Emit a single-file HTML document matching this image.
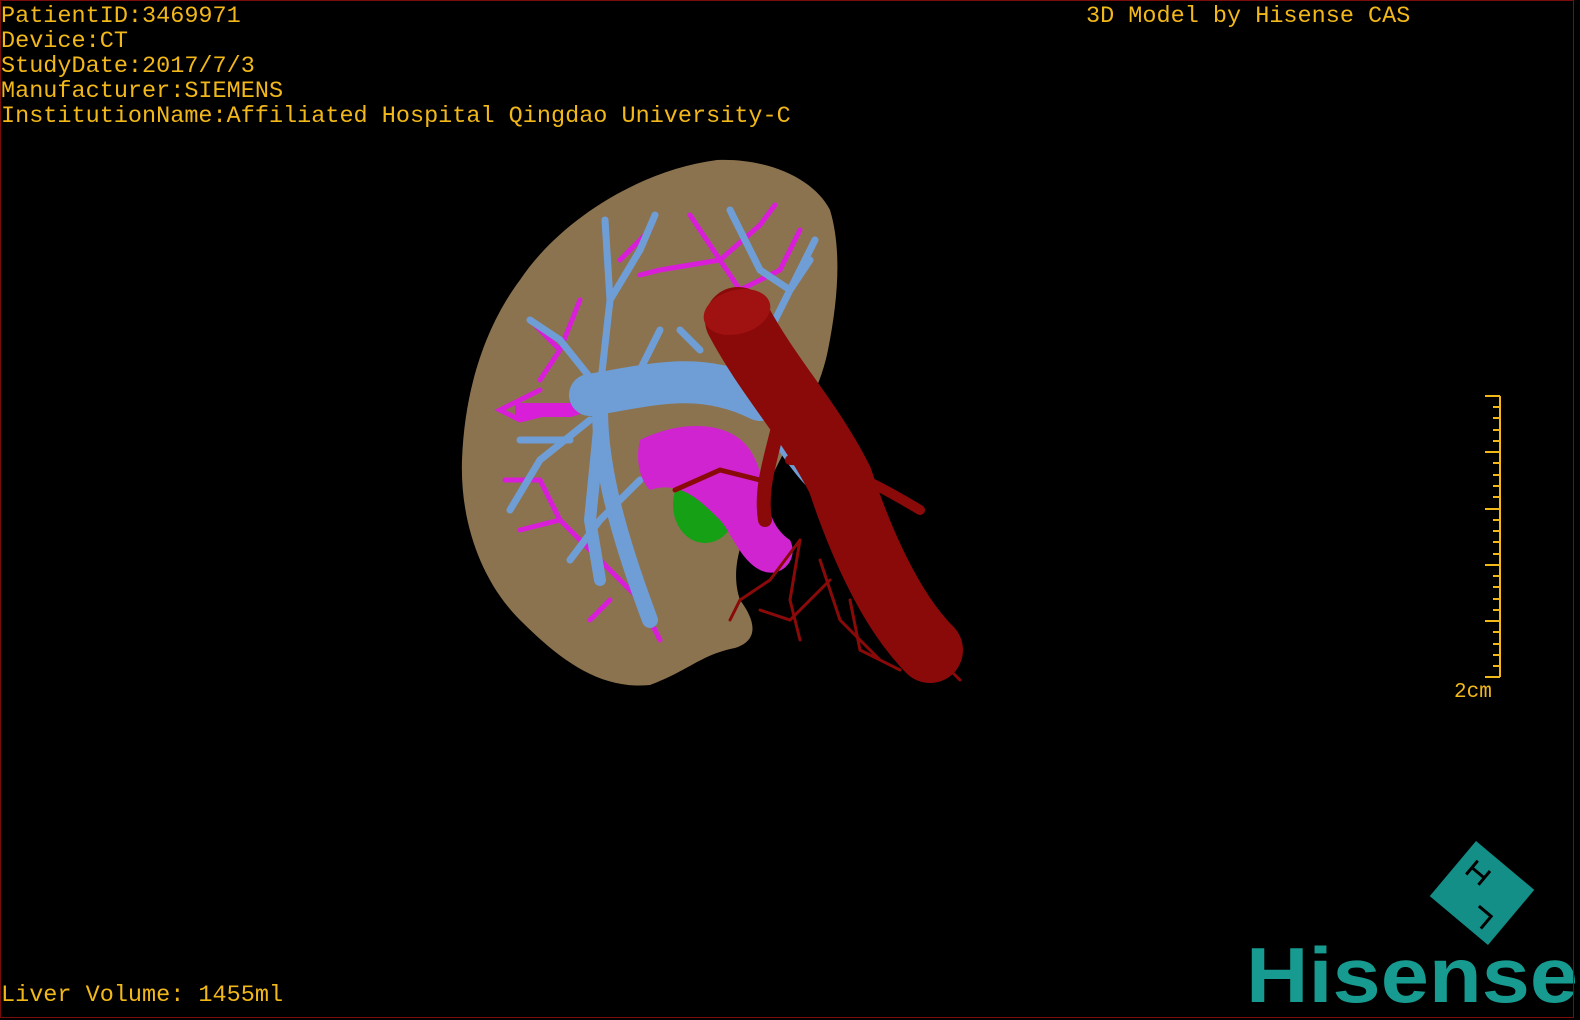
<!DOCTYPE html>
<html><head><meta charset="utf-8"><style>
html,body{margin:0;padding:0;background:#000;}
#f{position:relative;width:1580px;height:1020px;overflow:hidden;background:#000;}
#b{position:absolute;left:0;top:0;width:1572px;height:1016px;border:1px solid #7a0c0c;}
.t{position:absolute;font-family:"Liberation Mono",monospace;font-size:23.5px;color:#f2b81a;white-space:pre;line-height:25px;}
</style></head><body><div id="f">
<svg width="1580" height="1020" style="position:absolute;left:0;top:0">
<!-- liver -->
<path d="M717,160 C770,158 815,180 830,210 C842,250 838,300 828,350 C820,390 800,420 790,440 L760,500 C740,540 730,570 740,600 C755,620 760,640 735,648 C700,655 690,670 650,685 C600,690 560,660 520,620 C480,580 460,520 462,460 C465,380 490,320 520,280 C560,220 640,170 717,160 Z" fill="#8c7350"/>
<!-- magenta branches -->
<g stroke="#d81ed8" stroke-width="5" fill="none" stroke-linecap="round">
<path d="M740,290 L720,260 L690,215 M720,260 L760,225 L775,205 M720,260 L660,270 L640,275 M740,290 L780,270 L800,230"/>
<path d="M580,300 L560,350 L540,380 M560,350 L530,320 M540,390 L500,410 L520,420 L560,410"/>
<path d="M600,560 L560,520 L520,530 M600,560 L640,600 L660,640 M560,520 L540,480 L505,480"/>
<path d="M650,230 L620,260 M610,600 L590,620"/>
</g>
<path d="M515,410 L570,410 L600,400" stroke="#d81ed8" stroke-width="14" fill="none"/>
<!-- blue vessels -->
<g stroke="#6f9ed6" stroke-linecap="round" fill="none">
<path d="M590,395 C650,385 700,370 760,400" stroke-width="42"/>
<path d="M600,410 C600,470 620,540 650,620" stroke-width="16"/>
<path d="M600,420 L590,520 L600,580" stroke-width="12"/>
<g stroke-width="7">
<path d="M600,390 L610,300 L605,220 M610,300 L640,250 L655,215 M600,390 L560,340 L530,320"/>
<path d="M590,420 L540,460 L510,510 M570,440 L520,440"/>
<path d="M660,330 L640,370 M680,330 L700,350"/>
<path d="M770,330 L790,290 L815,240 M790,290 L760,270 L730,210 M790,290 L810,260"/>
<path d="M640,480 L600,520 L570,560"/>
</g>
<path d="M780,440 C800,470 810,480 820,490" stroke-width="14"/>
</g>
<!-- green -->
<ellipse cx="705" cy="505" rx="32" ry="38" fill="#16a016"/>
<!-- magenta mass -->
<path d="M640,440 C680,420 730,420 750,450 C770,480 760,520 790,540 C800,560 780,580 760,570 C740,560 730,530 720,520 C700,500 680,480 650,490 C640,480 635,460 640,440 Z" fill="#d024d0"/>
<!-- aorta / red -->
<g stroke="#8a0a0a" stroke-linecap="round" fill="none">
<path d="M738,320 C770,380 810,420 840,480 C860,540 890,610 930,650" stroke-width="66"/>
<path d="M780,420 C770,460 760,490 765,520" stroke-width="14"/>
<path d="M790,460 C830,460 870,480 920,510" stroke-width="10"/>
<path d="M675,490 L720,470 L760,480" stroke-width="5"/>
<g stroke-width="3">
<path d="M800,540 L770,580 L740,600 L730,620 M800,540 L790,600 L800,640 M820,560 L840,620 L880,660 M830,580 L790,620 L760,610 M850,600 L860,650 L900,670 M870,610 L920,640 L960,680"/>
</g>
</g>
<ellipse cx="737" cy="312" rx="34" ry="22" fill="#a01212" transform="rotate(-15 737 312)"/>
<!-- scale bar -->
<g stroke="#f2b81a" stroke-width="2">
<line x1="1500" y1="396" x2="1500" y2="677"/>
<line x1="1485" y1="396" x2="1500" y2="396"/><line x1="1485" y1="452" x2="1500" y2="452"/><line x1="1485" y1="509" x2="1500" y2="509"/><line x1="1485" y1="565" x2="1500" y2="565"/><line x1="1485" y1="621" x2="1500" y2="621"/><line x1="1485" y1="677" x2="1500" y2="677"/>
<path d="M1493,407H1500M1493,418H1500M1493,430H1500M1493,441H1500M1493,463H1500M1493,475H1500M1493,486H1500M1493,497H1500M1493,520H1500M1493,531H1500M1493,542H1500M1493,554H1500M1493,576H1500M1493,587H1500M1493,599H1500M1493,610H1500M1493,632H1500M1493,644H1500M1493,655H1500M1493,666H1500"/>
</g>
<!-- logo diamond -->
<g transform="translate(1482,893) rotate(40)">
<rect x="-38" y="-36" width="76" height="72" fill="#138f88"/>
<path d="M-24,-22 L-24,-4 M-8,-22 L-8,-4 M-24,-13 L-8,-13 M6,12 L22,12 L22,28" stroke="#000" stroke-width="3" fill="none"/>
</g>
<text x="1246" y="1002" font-family="Liberation Sans, sans-serif" font-weight="bold" font-size="78" fill="#179b90" textLength="332" lengthAdjust="spacingAndGlyphs">Hisense</text>
</svg>
<div id="b"></div>
<div class="t" style="left:1px;top:4px">PatientID:3469971
Device:CT
StudyDate:2017/7/3
Manufacturer:SIEMENS
InstitutionName:Affiliated Hospital Qingdao University-C</div>
<div class="t" style="left:1086px;top:4px">3D Model by Hisense CAS</div>
<div class="t" style="left:1px;top:983px">Liver Volume: 1455ml</div>
<div class="t" style="left:1454px;top:680px;font-size:21px">2cm</div>
</div></body></html>
